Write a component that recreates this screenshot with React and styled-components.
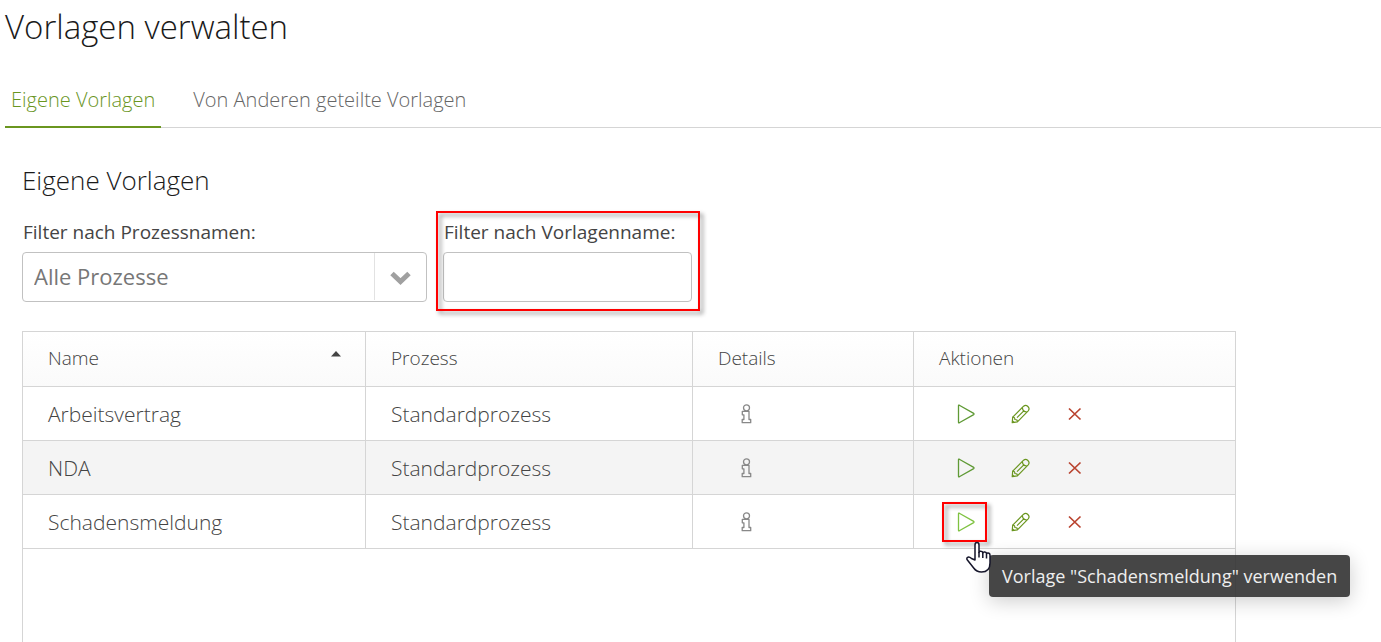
import { useState } from 'react';
import styled, { createGlobalStyle } from 'styled-components';

const GlobalStyle = createGlobalStyle`
* {
  box-sizing: border-box;
}

body {
  margin: 0;
  background: #fff;
  color: #1a1a1a;
  font-family: 'Open Sans', sans-serif;
  font-weight: 300;
}
`;

const Page = styled.div`
display: flex;
flex-direction: column;
min-height: 100vh;
padding-left: 5px;
`;

const Title = styled.h1`
margin: 0;
font-size: 33px;
font-weight: 300;
line-height: 54px;
`;

const Tabs = styled.nav`
display: flex;
gap: 26px;
margin-top: 20px;
box-shadow: inset 0 -1px #d5d5d5;
`;

const Tab = styled.a`
height: 54px;
padding: 0 6px;
border-bottom: 2px solid ${({ $active }) => ($active ? '#6a961f' : 'transparent')};
color: ${({ $active }) => ($active ? '#6a961f' : '#666')};
font-size: 20px;
line-height: 52px;
text-decoration: none;
`;

const Panel = styled.main`
display: flex;
flex: 1;
flex-direction: column;
padding: 34px 17px 0;
`;

const PanelTitle = styled.h2`
margin: 0;
font-size: 26px;
font-weight: 300;
line-height: 36px;
`;

const Filters = styled.div`
display: flex;
gap: 16px;
margin-top: 18px;
`;

const Field = styled.div`
position: relative;
width: ${({ $wide }) => ($wide ? '405px' : '249px')};
`;

const Label = styled.label`
display: block;
height: 36px;
padding-left: 1px;
color: #444;
font-size: 19px;
font-weight: 400;
line-height: 32px;
white-space: nowrap;
`;

const SelectBox = styled.div`
position: relative;
`;

const Select = styled.select`
width: 100%;
height: 50px;
padding: 0 60px 2px 11px;
border: 1px solid #c1c1c1;
border-radius: 4px;
appearance: none;
background: #fff;
color: #777;
font-family: inherit;
font-size: 22px;
`;

const SelectArrow = styled.span`
position: absolute;
top: 1px;
right: 1px;
display: flex;
align-items: center;
justify-content: center;
width: 52px;
height: 47px;
border-left: 1px solid #e2e2e2;
pointer-events: none;
`;

const Input = styled.input`
display: block;
width: 100%;
height: 50px;
padding: 0 11px;
border: 1px solid #c1c1c1;
border-radius: 4px;
color: #777;
font-family: inherit;
font-size: 22px;
`;

const Highlight = styled.span`
position: absolute;
inset: ${({ $inset }) => $inset};
border: 2px solid #f00;
filter: drop-shadow(3px 3px 2px rgba(0, 0, 0, 0.45));
pointer-events: none;
`;

const TableFrame = styled.div`
flex: 1;
max-width: 1214px;
margin-top: 29px;
border: 1px solid #d5d5d5;
border-bottom: 0;
`;

const Table = styled.table`
width: 100%;
border-collapse: separate;
border-spacing: 0;
table-layout: fixed;
`;

const HeadCell = styled.th`
width: ${({ $width }) => $width};
height: 55px;
padding: 0 24px 2px 25px;
border-right: 1px solid #d5d5d5;
border-bottom: 1px solid #d5d5d5;
background: linear-gradient(#fff, #fafafa);
color: #444;
font-size: 19px;
font-weight: 300;
text-align: left;

&:last-child {
  border-right: 0;
}
`;

const SortLabel = styled.span`
display: flex;
align-items: center;
justify-content: space-between;
`;

const SortArrow = styled.svg`
width: 10px;
height: 14px;
`;

const Row = styled.tr`
&:nth-child(even) {
  background: #f4f4f4;
}
`;

const Cell = styled.td`
height: 54px;
padding: 0 25px;
border-right: 1px solid #d5d5d5;
border-bottom: 1px solid #d5d5d5;
color: #444;
font-size: 21px;

&:last-child {
  border-right: 0;
}
`;

const Actions = styled.div`
display: flex;
`;

const IconButton = styled.button`
position: relative;
display: flex;
align-items: center;
justify-content: center;
width: 54px;
height: 40px;
padding: 0;
border: 0;
background: none;
color: ${({ $color }) => $color};
cursor: pointer;

svg {
  width: 20px;
  height: 20px;
  fill: none;
  stroke: currentColor;
  stroke-linejoin: round;
}
`;

const Pointer = styled.svg`
position: absolute;
top: 39px;
left: 26px;
z-index: 2;
width: 28px;
height: 32px;
`;

const ActionSlot = styled.div`
position: relative;
`;

const Tooltip = styled.div`
position: absolute;
top: 53px;
left: 50px;
z-index: 1;
padding: 0 13px;
border-radius: 4px;
background: rgba(50, 50, 50, 0.9);
box-shadow: 0 4px 20px rgba(0, 0, 0, 0.2);
color: #eee;
font-size: 18px;
font-weight: 400;
line-height: 42px;
white-space: nowrap;
`;

const InfoIcon = () => (
  <svg viewBox="0 0 20 20" strokeWidth="1.3" aria-hidden="true">
    <circle cx="11.5" cy="3.8" r="3" />
    <path d="M7.300 7.300h6.700v8.200h1.700v3.200H7.200v-3.200h1.700v-4.700H7.300z" />
  </svg>
);

const PlayIcon = () => (
  <svg viewBox="0 0 20 20" strokeWidth="1.3" aria-hidden="true">
    <path d="M3.300 1.200q-.8-.4-.8.500v16.600q0 .9.800.5l14.400-8.200q.8-.6 0-1.200z" />
  </svg>
);

const PencilIcon = () => (
  <svg viewBox="0 0 20 20" strokeWidth="1.2" aria-hidden="true">
    <path d="M2.200 18.700l.5-5.600L13.600 2.200q2.100-1.900 4.300.3t.3 4.300L7.400 17.800z" />
    <path d="M2.700 13.100q2.100-.2 2.200 2.400 2.600-.1 2.500 2.300M12.400 3.500q.2 4.300 4.500 4.500M2.300 16.600l2 2M7 13.600l6.800-6.700" />
  </svg>
);

const DeleteIcon = () => (
  <svg viewBox="0 0 20 20" strokeWidth="1.7" aria-hidden="true">
    <path d="M5 4.500l11.500 11M16.500 4.500l-11.500 11" />
  </svg>
);

const HandPointer = () => (
  <Pointer viewBox="0 0 28 32" fill="#fff" stroke="#15152a" strokeWidth="1.5" strokeLinejoin="round" aria-hidden="true">
    <path d="M10 19V4q0-2.500 2-2.500t2 2.500v7.500q0-1.500 2-1.300 1.800.1 1.800 1.800.2-1.200 2-1 1.700.2 1.700 1.800.3-1 1.800-.8 1.700.2 1.700 2V22q0 9-8.500 9-5 0-7.800-4L2 18.500q-.6-1.800 1-2.300 1.500-.4 3.500 1.300z" />
    <path d="M14 11v5.500M17.800 12v5M21.500 13v4.500" fill="none" />
  </Pointer>
);

const templates = [
  { name: 'Arbeitsvertrag', process: 'Standardprozess' },
  { name: 'NDA', process: 'Standardprozess' },
  { name: 'Schadensmeldung', process: 'Standardprozess', hovered: true },
];

function TemplateRow({ name, process, hovered }) {
  return (
    <Row>
      <Cell>{name}</Cell>
      <Cell>{process}</Cell>
      <Cell>
        <IconButton $color="#888" aria-label="Details">
          <InfoIcon />
        </IconButton>
      </Cell>
      <Cell>
        <Actions>
          <ActionSlot>
            <IconButton $color={hovered ? '#7fc241' : '#5f9a35'} aria-label="Verwenden">
              <PlayIcon />
              {hovered && <Highlight $inset="0 6px 0 3px" />}
            </IconButton>
            {hovered && <HandPointer />}
            {hovered && <Tooltip role="tooltip">Vorlage "{name}" verwenden</Tooltip>}
          </ActionSlot>
          <IconButton $color="#6a961f" aria-label="Bearbeiten">
            <PencilIcon />
          </IconButton>
          <IconButton $color="#b9432f" aria-label="Löschen">
            <DeleteIcon />
          </IconButton>
        </Actions>
      </Cell>
    </Row>
  );
}

function App() {
  const [filter, setFilter] = useState('');

  return (
    <Page>
      <GlobalStyle />
      <Title>Vorlagen verwalten</Title>
      <Tabs>
        <Tab href="#eigene" $active>Eigene Vorlagen</Tab>
        <Tab href="#geteilte">Von Anderen geteilte Vorlagen</Tab>
      </Tabs>
      <Panel>
        <PanelTitle>Eigene Vorlagen</PanelTitle>
        {/* Filters */}
        <Filters>
          <Field $wide>
            <Label htmlFor="process">Filter nach Prozessnamen:</Label>
            <SelectBox>
              <Select id="process">
                <option>Alle Prozesse</option>
              </Select>
              <SelectArrow>
                <svg width="22" height="16" viewBox="0 0 22 16" fill="none" stroke="#a0a0a0" strokeWidth="5" aria-hidden="true">
                  <path d="M2 4.500l8.500 8L19 4.500" />
                </svg>
              </SelectArrow>
            </SelectBox>
          </Field>
          <Field>
            <Label htmlFor="template">Filter nach Vorlagenname:</Label>
            <Input id="template" value={filter} onChange={(e) => setFilter(e.target.value)} />
            <Highlight $inset="-5px -8px -9px -7px" />
          </Field>
        </Filters>
        {/* Templates */}
        <TableFrame>
          <Table>
            <thead>
              <tr>
                <HeadCell $width="343px">
                  <SortLabel>
                    Name
                    <SortArrow viewBox="0 0 10 14" aria-hidden="true">
                      <path d="M0 5.500L5 0l5 5.500z" fill="#444" />
                    </SortArrow>
                  </SortLabel>
                </HeadCell>
                <HeadCell $width="327px">Prozess</HeadCell>
                <HeadCell $width="221px">Details</HeadCell>
                <HeadCell>Aktionen</HeadCell>
              </tr>
            </thead>
            <tbody>
              {templates.map((template) => (
                <TemplateRow key={template.name} {...template} />
              ))}
            </tbody>
          </Table>
        </TableFrame>
      </Panel>
    </Page>
  );
}

export default App;
